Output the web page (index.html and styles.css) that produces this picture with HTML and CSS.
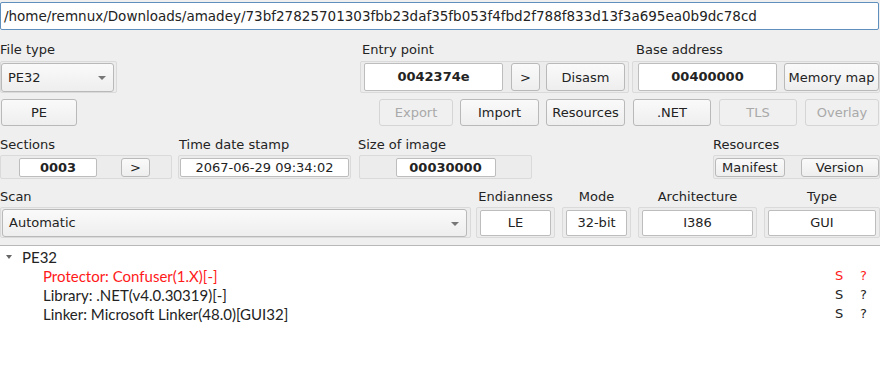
FILE: index.html
```html
<!DOCTYPE html>
<html lang="en">
  <head>
    <meta charset="UTF-8" />
    <title>Detect It Easy</title>
    <link rel="stylesheet" href="styles.css">
  </head>
  <body>
    <div class="path">/home/remnux/Downloads/amadey/73bf27825701303fbb23daf35fb053f4fbd2f788f833d13f3a695ea0b9dc78cd</div>

    <div class="labels labels-top">
      <span class="lbl lbl-filetype">File type</span>
      <span class="lbl lbl-entry">Entry point</span>
      <span class="lbl">Base address</span>
    </div>

    <div class="row row-main">
      <div class="frame f-filetype">
        <div class="combo combo-filetype">PE32<span class="arrow"></span></div>
      </div>
      <div class="frame f-entry">
        <div class="field bold w-addr">0042374e</div>
        <button class="btn w-go">&gt;</button>
        <button class="btn w-disasm">Disasm</button>
      </div>
      <div class="frame f-base">
        <div class="field bold w-addr">00400000</div>
        <button class="btn w-memmap">Memory map</button>
      </div>
    </div>

    <div class="row row-buttons">
      <button class="btn b-pe">PE</button>
      <button class="btn b-export" disabled>Export</button>
      <button class="btn b-import">Import</button>
      <button class="btn b-resources">Resources</button>
      <button class="btn b-net">.NET</button>
      <button class="btn b-tls" disabled>TLS</button>
      <button class="btn b-overlay" disabled>Overlay</button>
    </div>

    <div class="labels labels-mid">
      <span class="lbl lbl-sections">Sections</span>
      <span class="lbl lbl-time">Time date stamp</span>
      <span class="lbl lbl-size">Size of image</span>
      <span class="lbl">Resources</span>
    </div>

    <div class="row row-info">
      <div class="frame small f-sections">
        <div class="field bold w-sec">0003</div>
        <button class="btn w-go small-btn">&gt;</button>
      </div>
      <div class="frame small f-time">
        <div class="field w-time">2067-06-29 09:34:02</div>
      </div>
      <div class="frame small f-size">
        <div class="field bold w-size">00030000</div>
      </div>
      <div class="frame small f-res">
        <button class="btn small-btn w-manifest">Manifest</button>
        <button class="btn small-btn w-version">Version</button>
      </div>
    </div>

    <div class="row row-scan">
      <div class="col col-scan">
        <span class="lbl">Scan</span>
        <div class="frame f-scan">
          <div class="combo combo-scan">Automatic<span class="arrow"></span></div>
        </div>
      </div>
      <div class="col col-endian">
        <span class="lbl">Endianness</span>
        <div class="frame f-prop"><div class="field">LE</div></div>
      </div>
      <div class="col col-mode">
        <span class="lbl">Mode</span>
        <div class="frame f-prop"><div class="field">32-bit</div></div>
      </div>
      <div class="col col-arch">
        <span class="lbl">Architecture</span>
        <div class="frame f-prop"><div class="field">I386</div></div>
      </div>
      <div class="col col-type">
        <span class="lbl">Type</span>
        <div class="frame f-prop"><div class="field">GUI</div></div>
      </div>
    </div>

    <div class="tree">
      <div class="node node-root">
        <span class="twisty"></span>
        <span class="name">PE32</span>
      </div>
      <div class="node node-child detect-red">
        <span class="name">Protector: Confuser(1.X)[-]</span>
        <span class="flag">S</span>
        <span class="flag flag-last">?</span>
      </div>
      <div class="node node-child">
        <span class="name">Library: .NET(v4.0.30319)[-]</span>
        <span class="flag">S</span>
        <span class="flag flag-last">?</span>
      </div>
      <div class="node node-child">
        <span class="name">Linker: Microsoft Linker(48.0)[GUI32]</span>
        <span class="flag">S</span>
        <span class="flag flag-last">?</span>
      </div>
    </div>
  </body>
</html>
```

FILE: styles.css
```css
body {
  margin: 0;
  width: 880px;
  height: 371px;
  overflow: hidden;
  background-color: #efefef;
  font-family: "DejaVu Sans", sans-serif;
  font-size: 13px;
  color: #232323;
}

.path {
  box-sizing: border-box;
  width: 879px;
  height: 28px;
  margin-top: 2px;
  padding: 0 3px;
  font-size: 13.5px;
  line-height: 26px;
  background: #fff;
  border: 1px solid #5f8fbd;
  border-radius: 2px;
  white-space: nowrap;
  overflow: hidden;
}

.labels {
  display: flex;
  height: 18px;
  line-height: 18px;
}

.labels-top {
  margin-top: 11px;
}

.labels-mid {
  margin-top: 10px;
}

.lbl {
  white-space: nowrap;
}

.lbl-filetype { width: 362px; }
.lbl-entry { width: 274px; }
.lbl-sections { width: 179px; }
.lbl-time { width: 179px; }
.lbl-size { width: 355px; }

.row {
  display: flex;
}

.row-main {
  margin-top: 2px;
  height: 32px;
}

.frame {
  box-sizing: border-box;
  display: flex;
  align-items: center;
  border: 1px solid #dadada;
  border-radius: 2px;
  background: #ececec;
}

.f-filetype {
  width: 117px;
  padding: 0 2px 0 0;
}

.f-entry {
  width: 269px;
  margin-left: 243px;
  padding: 0 3px;
}

.f-base {
  width: 248px;
  margin-left: 3px;
  padding: 0 0 0 5px;
}

.field {
  box-sizing: border-box;
  height: 28px;
  background: #fff;
  border: 1px solid #bdbdbd;
  border-radius: 2px;
  text-align: center;
  line-height: 26px;
  white-space: nowrap;
}

.bold {
  font-weight: bold;
}

.btn {
  box-sizing: border-box;
  height: 28px;
  padding: 0;
  font-family: inherit;
  font-size: 13px;
  color: #232323;
  background: linear-gradient(#fafafa, #eeeeee);
  border: 1px solid #b9b9b9;
  border-radius: 3px;
  white-space: nowrap;
}

.btn:disabled {
  color: #a9a9a9;
  background: #f0f0f0;
  border-color: #d5d5d5;
}

.w-addr { width: 139px; }
.w-go { width: 29px; margin-left: 8px; }
.w-disasm { width: 79px; margin-left: 6px; }
.w-memmap { width: 95px; margin-left: 7px; }

.combo {
  box-sizing: border-box;
  position: relative;
  height: 29px;
  padding-left: 6px;
  line-height: 27px;
  background: linear-gradient(#fafafa, #eeeeee);
  border: 1px solid #b9b9b9;
  border-radius: 3px;
}

.combo-filetype {
  width: 114px;
}

.arrow {
  position: absolute;
  right: 7px;
  top: 12px;
  border-left: 4px solid transparent;
  border-right: 4px solid transparent;
  border-top: 4px solid #777;
}

.row-buttons {
  margin-top: 6px;
}

.row-buttons .btn {
  height: 27px;
}

.b-pe { width: 76px; margin-left: 1px; }
.b-export { width: 74px; margin-left: 302px; }
.b-import { width: 79px; margin-left: 7px; }
.b-resources { width: 79px; margin-left: 7px; }
.b-net { width: 78px; margin-left: 8px; }
.b-tls { width: 78px; margin-left: 8px; }
.b-overlay { width: 74px; margin-left: 8px; }

.row-info {
  margin-top: 1px;
  height: 24px;
}

.frame.small {
  height: 24px;
}

.frame.small .field {
  height: 19px;
  line-height: 17px;
}

.small-btn {
  height: 19px;
  line-height: 17px;
}

.f-sections { width: 172px; }
.w-sec { width: 78px; margin-left: 18px; }
.f-sections .w-go { margin-left: 24px; }

.f-time { width: 173px; margin-left: 6px; padding: 0 1px; }
.w-time { width: 169px; }

.f-size { width: 173px; margin-left: 8px; justify-content: center; }
.w-size { width: 100px; }

.f-res { width: 167px; margin-left: 181px; padding-left: 1px; }
.w-manifest { width: 70px; }
.w-version { width: 79px; margin-left: 16px; }

.row-scan {
  margin-top: 9px;
}

.col {
  display: flex;
  flex-direction: column;
  align-items: center;
}

.col .lbl {
  height: 18px;
  line-height: 18px;
  margin-bottom: 1px;
}

.col-scan { width: 471px; align-items: stretch; }
.col-endian { width: 79px; margin-left: 5px; }
.col-mode { width: 69px; margin-left: 7px; }
.col-arch { width: 119px; margin-left: 7px; }
.col-type { width: 116px; margin-left: 7px; }

.f-scan {
  height: 31px;
  padding: 0 3px 0 1px;
}

.combo-scan {
  flex: 1;
  height: 28px;
  line-height: 26px;
}

.f-prop {
  width: 100%;
  height: 31px;
  padding: 2px 3px 1px;
}

.f-prop .field {
  flex: 1;
  height: 26px;
  line-height: 24px;
}

.tree {
  margin-top: 7px;
  height: 130px;
  padding-top: 1px;
  background: #fff;
  border-top: 1px solid #b8b8b8;
  font-family: Lato, "DejaVu Sans", sans-serif;
  font-size: 15px;
}

.node {
  display: flex;
  align-items: center;
  height: 19px;
  white-space: nowrap;
}

.node-root {
  padding-left: 6px;
}

.twisty {
  width: 0;
  height: 0;
  margin-right: 10px;
  border-left: 3px solid transparent;
  border-right: 3px solid transparent;
  border-top: 4px solid #666;
}

.node-child {
  padding-left: 43px;
}

.node-child .name {
  flex-shrink: 0;
  width: 792px;
}

.flag {
  flex-shrink: 0;
  width: 25px;
  font-family: "DejaVu Sans", sans-serif;
  font-size: 13px;
}

.flag-last {
  width: 20px;
}

.detect-red {
  color: #ff1a1a;
}
```
